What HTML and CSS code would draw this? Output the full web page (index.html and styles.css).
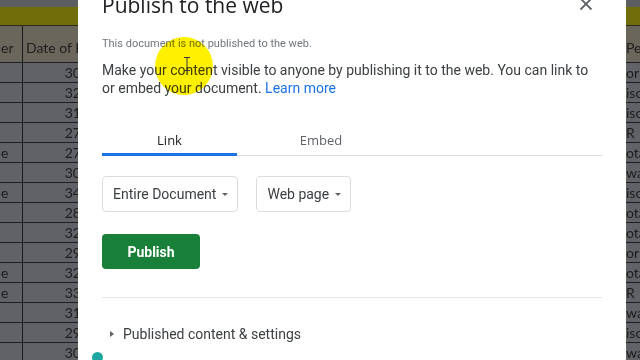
FILE: index.html
```html
<!DOCTYPE html>
<html>
<head>
<meta charset="utf-8">
<link rel="stylesheet" href="styles.css">
</head>
<body>
<div class="sheet">
  <div class="top-strip"></div>
  <div class="olive"></div>
  <div class="row head"><div class="c a">er</div><div class="c b">Date of B</div><div class="c mid"></div><div class="c d">Pe</div></div>
  <div class="row"><div class="c a"></div><div class="c b num">30</div><div class="c mid"></div><div class="c d">or</div></div>
  <div class="row"><div class="c a"></div><div class="c b num">32</div><div class="c mid"></div><div class="c d">iso</div></div>
  <div class="row"><div class="c a"></div><div class="c b num">31</div><div class="c mid"></div><div class="c d">iso</div></div>
  <div class="row"><div class="c a"></div><div class="c b num">27</div><div class="c mid"></div><div class="c d">R</div></div>
  <div class="row"><div class="c a">e</div><div class="c b num">27</div><div class="c mid"></div><div class="c d">ota</div></div>
  <div class="row"><div class="c a"></div><div class="c b num">30</div><div class="c mid"></div><div class="c d">wa</div></div>
  <div class="row"><div class="c a">e</div><div class="c b num">34</div><div class="c mid"></div><div class="c d">iso</div></div>
  <div class="row"><div class="c a"></div><div class="c b num">28</div><div class="c mid"></div><div class="c d">ota</div></div>
  <div class="row"><div class="c a"></div><div class="c b num">32</div><div class="c mid"></div><div class="c d">ota</div></div>
  <div class="row"><div class="c a"></div><div class="c b num">29</div><div class="c mid"></div><div class="c d">or</div></div>
  <div class="row"><div class="c a">e</div><div class="c b num">32</div><div class="c mid"></div><div class="c d">ota</div></div>
  <div class="row"><div class="c a">e</div><div class="c b num">33</div><div class="c mid"></div><div class="c d">R</div></div>
  <div class="row"><div class="c a"></div><div class="c b num">31</div><div class="c mid"></div><div class="c d">wa</div></div>
  <div class="row"><div class="c a"></div><div class="c b num">29</div><div class="c mid"></div><div class="c d">iso</div></div>
  <div class="row"><div class="c a"></div><div class="c b num">30</div><div class="c mid"></div><div class="c d">wa</div></div>
</div>

<div class="dialog">
  <div class="dlg-head">
    <h1 class="title">Publish to the web</h1>
    <svg class="close" width="14" height="14" viewBox="0 0 14 14"><path d="M1.5 1.5 L12.5 12.5 M12.5 1.5 L1.5 12.5" stroke="#5f6368" stroke-width="1.8" fill="none"/></svg>
  </div>
  <p class="status">This document is not published to the web.</p>
  <p class="desc">Make your content visible to anyone by publishing it to the web. You can link to or embed your document. <span class="link">Learn more</span></p>
  <div class="tabs">
    <div class="tab active">Link</div>
    <div class="tab embed">Embed</div>
  </div>
  <div class="selects">
    <div class="select">Entire Document<span class="caret"></span></div>
    <div class="select">Web page<span class="caret"></span></div>
  </div>
  <div class="btn">Publish</div>
  <div class="sep"></div>
  <div class="more"><span class="tri"></span>Published content &amp; settings</div>
</div>

<div class="highlight"></div>
<svg class="ibeam" width="8" height="14" viewBox="0 0 8 14"><path d="M1 0.5 H7 M4 0.5 V13.5 M1 13.5 H7" stroke="#3a3a3a" stroke-width="1" fill="none"/></svg>
<div class="dot"></div>
</body>
</html>
```

FILE: styles.css
```css
html, body {
  margin: 0;
  padding: 0;
  width: 640px;
  height: 360px;
  overflow: hidden;
  background: #5f6166;
}
.sheet {
  display: flex;
  flex-direction: column;
  font-family: Lato, "Open Sans", sans-serif;
  font-size: 14px;
  color: #1c1c1c;
}
.top-strip { height: 7px; background: #5c5e62; }
.olive { height: 18px; background: #726d0b; border-bottom: 1px solid #2a2a20; }
.row {
  display: grid;
  grid-template-columns: 23px 62px 1fr 15px;
  height: 20px;
  box-sizing: border-box;
  border-bottom: 1px solid #1f1f22;
  background: #606267;
}
.row.head {
  height: 37px;
  background: #6b665c;
  align-items: end;
  font-size: 14px;
}
.c {
  line-height: 19px;
  white-space: nowrap;
  overflow: hidden;
}
.head .c { line-height: 28px; height: 36px; display: flex; align-items: flex-end; }
.c.a { border-right: 1px solid #1a1a1a; padding-left: 1px; }
.c.b { padding-left: 3px; }
.c.num { text-align: right; padding-right: 4px; padding-left: 0; }
.c.d { padding-left: 1px; }

.dialog {
  position: absolute;
  left: 78px;
  top: -9px;
  width: 548px;
  height: 380px;
  box-sizing: border-box;
  background: #ffffff;
  padding: 0 24px;
  font-family: Roboto, "Liberation Sans", sans-serif;
  color: #3c4043;
}
.dlg-head {
  display: flex;
  justify-content: space-between;
  align-items: flex-start;
}
.title {
  margin: 0;
  font-family: "Open Sans", Roboto, sans-serif;
  font-weight: 400;
  font-size: 21px;
  line-height: 28px;
  color: #202124;
}
.close { margin-top: 6px; margin-right: 9px; }
.status {
  margin: 17px 0 0;
  font-size: 11px;
  line-height: 16px;
  color: #70757a;
}
.desc {
  margin: 9px 0 0;
  font-size: 14px;
  line-height: 18px;
  color: #3c4043;
  width: 500px;
}
.link { color: #1a73e8; }
.tabs {
  margin-top: 33px;
  display: flex;
  border-bottom: 1px solid #dadce0;
}
.tab {
  font-family: "Open Sans", Roboto, sans-serif;
  font-size: 13px;
  line-height: 20px;
  text-align: center;
  padding-bottom: 5px;
  color: #5f6368;
}
.tab.active {
  width: 135px;
  color: #202124;
  border-bottom: 3px solid #1a73e8;
  margin-bottom: -1px;
  padding-bottom: 3px;
}
.tab.embed { width: 168px; }
.selects {
  margin-top: 20px;
  display: flex;
  gap: 18px;
}
.select {
  height: 36px;
  box-sizing: border-box;
  border: 1px solid #dadce0;
  border-radius: 4px;
  padding: 0 9px 0 10px;
  display: flex;
  align-items: center;
  font-size: 14px;
  color: #3c4043;
}
.caret {
  margin-left: 6px;
  width: 0;
  height: 0;
  border-left: 3px solid transparent;
  border-right: 3px solid transparent;
  border-top: 3px solid #5f6368;
}
.btn {
  margin-top: 22px;
  width: 98px;
  height: 35px;
  border-radius: 4px;
  background: #188038;
  color: #ffffff;
  font-weight: 700;
  font-size: 14px;
  display: flex;
  align-items: center;
  justify-content: center;
}
.sep {
  margin-top: 28px;
  height: 1px;
  background: #e3e5e8;
}
.more {
  margin-top: 26px;
  display: flex;
  align-items: center;
  font-size: 14px;
  line-height: 20px;
  color: #3c4043;
}
.tri {
  margin-left: 8px;
  margin-right: 9px;
  width: 0;
  height: 0;
  border-top: 3px solid transparent;
  border-bottom: 3px solid transparent;
  border-left: 4px solid #5f6368;
}
.highlight {
  position: absolute;
  left: 155px;
  top: 37px;
  width: 58px;
  height: 58px;
  border-radius: 50%;
  background: #fff000;
  mix-blend-mode: multiply;
}
.ibeam {
  position: absolute;
  left: 183px;
  top: 57px;
}
.dot {
  position: absolute;
  left: 92px;
  top: 352px;
  width: 11px;
  height: 11px;
  border-radius: 50%;
  background: #1ea7a0;
}
```
